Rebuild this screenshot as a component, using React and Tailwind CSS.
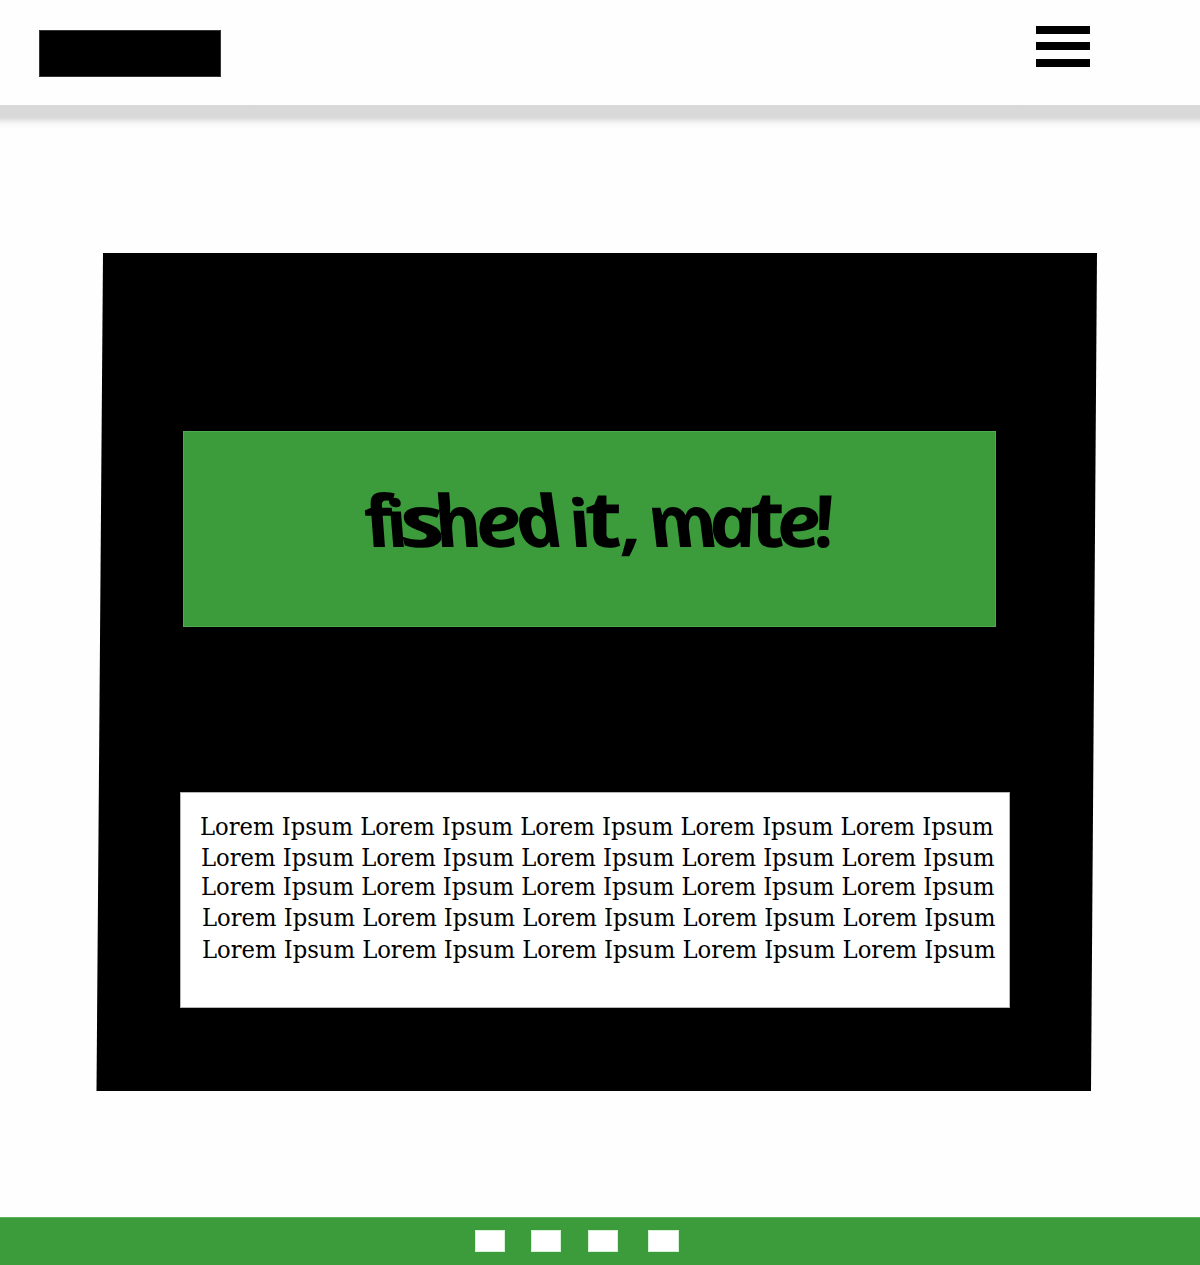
const phrase = 'Lorem Ipsum Lorem Ipsum Lorem Ipsum Lorem Ipsum Lorem Ipsum';

const lines = [
  'h-[31px] ml-[19px]',
  'h-[29px] ml-5',
  'h-[31px] ml-5',
  'h-8 ml-[21px]',
  'h-[31px] ml-[20.5px]',
];

// Uneven widths and slants give the headline its scrawled look.
const letters = [
  ['f', 'w-[33px] not-italic skew-x-[4deg] scale-x-[1.05]'],
  ['i', 'w-[14px] -ml-0.5 skew-x-[16deg] scale-y-[0.9]'],
  ['s', 'w-[42px] -ml-[3px] skew-x-[10deg] scale-x-[1.38]'],
  ['h', 'w-[37px] -ml-[3px] skew-x-[16deg] scale-x-[1.08]'],
  ['e', 'w-[41px] -ml-0.5 skew-x-[6deg] scale-x-[1.15]'],
  ['d', 'w-[45px] ml-0.5 skew-x-[19deg] scale-x-[1.1]'],
  [' ', 'w-[10px]'],
  ['i', 'w-[14px] skew-x-[16deg] scale-y-[0.92]'],
  ['t', 'w-[37px] -ml-0.5 skew-x-[12deg] scale-x-[1.25] scale-y-[1.08]'],
  [',', 'w-[14px] skew-x-[6deg]'],
  [' ', 'w-[18px]'],
  ['m', 'w-[60px] skew-x-[18deg] scale-x-[1.06]'],
  ['a', 'w-[42px] -ml-1 skew-x-[10deg] scale-x-[1.12]'],
  ['t', 'w-[32px] -ml-px skew-x-[12deg] scale-x-[1.15] scale-y-[1.08]'],
  ['e', 'w-[40px] -ml-[7px] skew-x-[6deg] scale-x-[1.12]'],
  ['!', 'w-[12px] skew-x-[9deg]'],
];

function Header() {
  return (
    <header>
      <div className="flex h-[105px] items-start justify-between pl-[39px] pr-[110px]">
        <div className="mt-[30px] h-[47px] w-[182px] border border-[#343434] bg-black" />
        <button aria-label="Menu" className="mt-[26px] flex w-[54px] flex-col">
          <span className="h-2 w-full bg-black" />
          <span className="mt-2 h-2 w-full bg-black" />
          <span className="mt-[9px] h-2 w-full bg-black" />
        </button>
      </div>
      <div className="h-[23px] bg-[linear-gradient(to_bottom,#d9d9d9_0px,#d8d8d8_11px,#dcdcdc_13px,#e6e6e6_15px,#f0f0f0_17px,#f8f8f8_19px,#fefefe_23px)]" />
    </header>
  );
}

function Hero() {
  return (
    <main className="ml-24 mt-[125px] h-[838px] w-[1001px] shrink-0 bg-black pt-[178px] [clip-path:polygon(7px_0px,1001px_0px,995px_838px,0.5px_838px)]">
      <div className="ml-[87px] h-[196px] w-[813px] border border-[#50ab50] bg-[#3c9c3c]">
        <h1 className="flex whitespace-pre pl-[180px] pt-[38px] font-['Open_Sans',sans-serif] text-[72px] font-bold italic leading-[98px] text-black">
          {letters.map(([letter, style], i) => (
            <span key={i} className={`flex shrink-0 origin-[50%_76%] justify-center ${style}`}>{letter}</span>
          ))}
        </h1>
      </div>
      <div className="ml-[84px] mt-[165px] h-[216px] w-[830px] border border-[#b5b5b5] bg-white pt-[19px] font-['DejaVu_Serif_Condensed','DejaVu_Serif',serif] text-[23.5px] leading-[30px] text-black">
        {lines.map((line, i) => (
          <p key={i} className={`w-fit origin-left scale-x-[1.073] whitespace-nowrap ${line}`}>{phrase}</p>
        ))}
      </div>
    </main>
  );
}

function Footer() {
  return (
    <footer className="mt-[126px] flex h-12 items-start border-t border-[#61b261] bg-[#3c9c3c] pl-[475px] pt-3">
      <span className="h-[22px] w-[30px] border border-[#d5f2d5] bg-white" />
      <span className="ml-[26px] h-[22px] w-[30px] border border-[#d5f2d5] bg-white" />
      <span className="ml-[27px] h-[22px] w-[30px] border border-[#d5f2d5] bg-white" />
      <span className="ml-[30px] h-[22px] w-[31px] border border-[#d5f2d5] bg-white" />
    </footer>
  );
}

export default function App() {
  return (
    <div className="flex h-[1265px] w-[1200px] flex-col overflow-hidden bg-[#fefefe]">
      <Header />
      <Hero />
      <Footer />
    </div>
  );
}
